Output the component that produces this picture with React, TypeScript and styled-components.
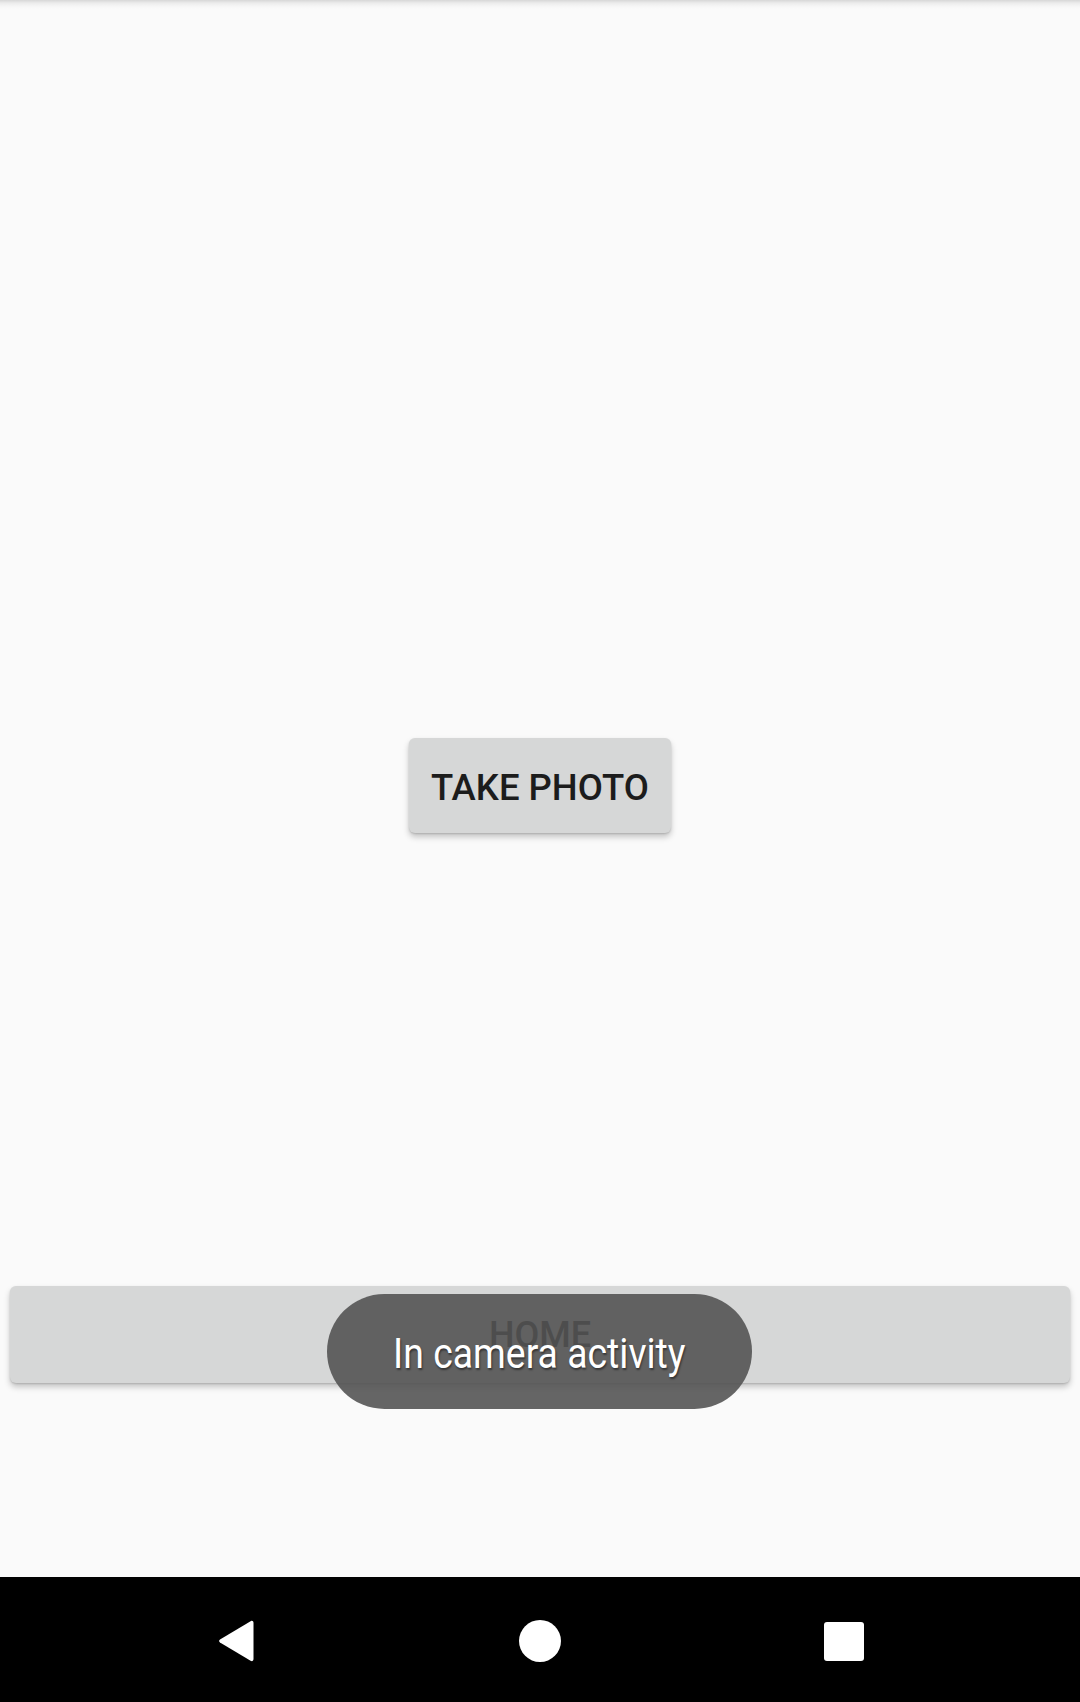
import React from "react";
import styled, { createGlobalStyle } from "styled-components";

const Global = createGlobalStyle`
  html, body { margin: 0; padding: 0; background: #fafafa; }
  body { font-family: Roboto, "Liberation Sans", sans-serif; }
  #root { width: 1080px; height: 1702px; }
`;

const Screen = styled.div`
  width: 1080px;
  height: 1702px;
  display: flex;
  flex-direction: column;
  background: #fafafa;
  overflow: hidden;
`;

const Main = styled.main`
  position: relative;
  flex: 1;
  display: flex;
  flex-direction: column;
  align-items: center;
  background: linear-gradient(
      to bottom,
      rgba(0, 0, 0, 0.14) 0px,
      rgba(0, 0, 0, 0.06) 3px,
      rgba(0, 0, 0, 0.02) 6px,
      rgba(0, 0, 0, 0) 9px
    ),
    #fafafa;
`;

const RaisedButton = styled.button<{ $wide?: boolean; $size: number }>`
  border: none;
  border-radius: 6px;
  background: #d6d7d7;
  color: #1c1c1c;
  font-family: Roboto, "Liberation Sans", sans-serif;
  font-weight: 500;
  font-size: ${(p) => p.$size}px;
  letter-spacing: 0;
  text-transform: uppercase;
  box-shadow: 0 4px 6px rgba(0, 0, 0, 0.22), 0 1px 2px rgba(0, 0, 0, 0.14);
  display: flex;
  align-items: center;
  justify-content: center;
  padding: 0;
  cursor: pointer;
  align-self: ${(p) => (p.$wide ? "stretch" : "center")};
  margin: ${(p) => (p.$wide ? "0 10px" : "0")};
`;

const TakePhoto = styled(RaisedButton)`
  width: 262px;
  height: 95px;
  margin-top: 738px;
  padding-top: 4px;
`;

const Home = styled(RaisedButton)`
  height: 97px;
  margin-top: 453px;
  color: #262626;
`;

const Toast = styled.div`
  position: absolute;
  left: 327px;
  top: 1294px;
  width: 425px;
  height: 115px;
  border-radius: 58px;
  background: rgba(82, 82, 82, 0.89);
  display: flex;
  align-items: center;
  justify-content: center;
`;

const ToastText = styled.span`
  display: inline-block;
  color: #ffffff;
  font-family: Roboto, "Liberation Sans", sans-serif;
  font-size: 42px;
  white-space: nowrap;
  transform: scaleX(0.89);
  margin-top: 3px;
  text-shadow: 1px 2px 2px rgba(0, 0, 0, 0.45);
`;

const NavBar = styled.nav`
  height: 125px;
  background: #000;
  display: grid;
  grid-template-columns: 1fr 1fr 1fr;
  align-items: center;
  justify-items: center;
`;

const NavSlot = styled.div<{ $shift: number }>`
  display: flex;
  align-items: center;
  justify-content: center;
  transform: translateX(${(p) => p.$shift}px);
  margin-top: 3px;
`;

const Dot = styled.div`
  width: 42px;
  height: 42px;
  border-radius: 50%;
  background: #fff;
`;

const Square = styled.div`
  width: 40px;
  height: 39px;
  border-radius: 3px;
  background: #fff;
`;

export default function App() {
  return (
    <Screen>
      <Global />
      <Main>
        <TakePhoto $size={36.5}>Take photo</TakePhoto>
        <Home $wide $size={36}>Home</Home>
        <Toast>
          <ToastText>In camera activity</ToastText>
        </Toast>
      </Main>
      <NavBar>
        <NavSlot $shift={56}>
          <svg width="38" height="44" viewBox="0 0 38 44">
            <path
              d="M34 2 C35.5 1.5 36.5 2.5 36.5 4 L36.5 40 C36.5 41.5 35.5 42.5 34 42 L3 23.5 C1.8 22.7 1.8 21.3 3 20.5 Z"
              fill="#fff"
            />
          </svg>
        </NavSlot>
        <NavSlot $shift={0}>
          <Dot />
        </NavSlot>
        <NavSlot $shift={-56}>
          <Square />
        </NavSlot>
      </NavBar>
    </Screen>
  );
}
